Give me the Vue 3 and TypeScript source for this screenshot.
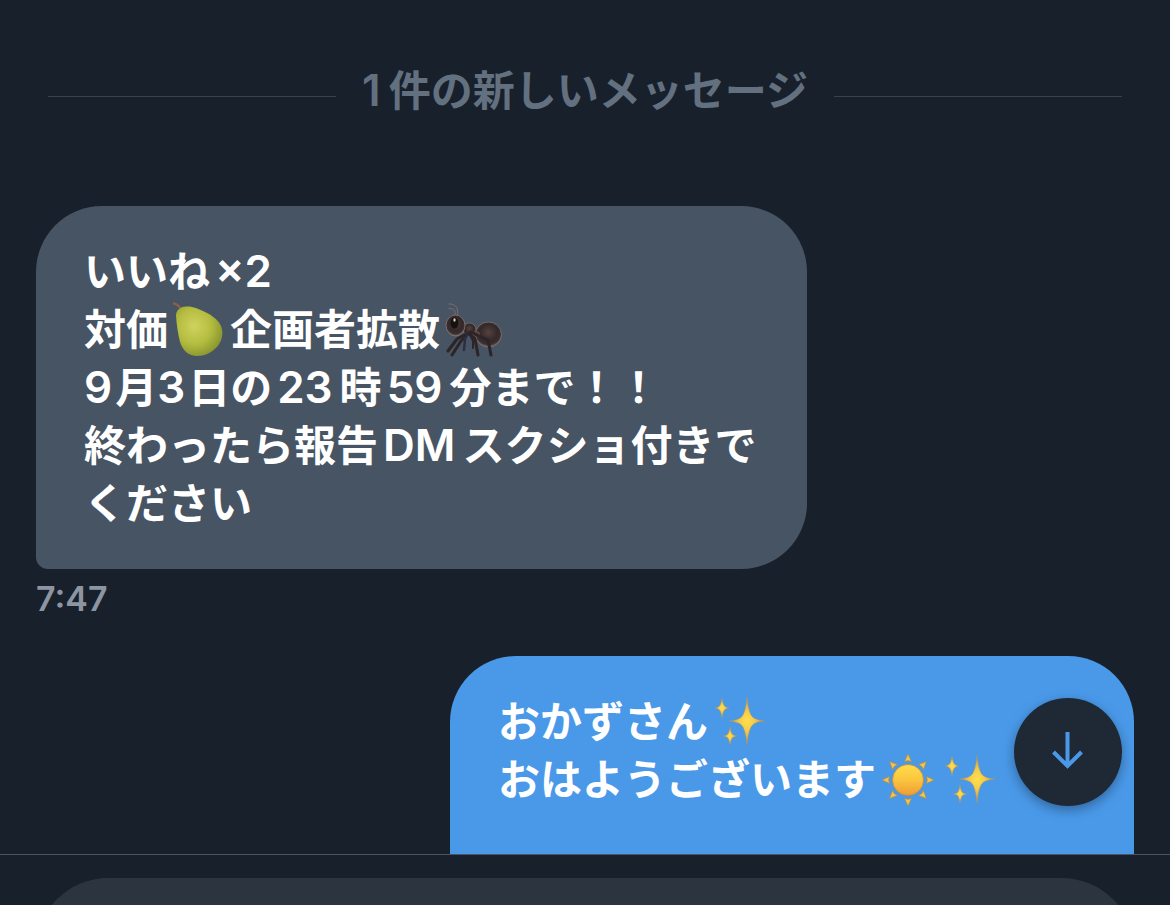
<script setup lang="ts">
import { ref } from 'vue'

type Part = { kind: 'text' | 'digit' | 'latin' | 'emoji'; value: string }
type Message = { id: number; side: 'incoming' | 'outgoing'; lines: Part[][]; time?: string }

const t = (value: string): Part => ({ kind: 'text', value })
const d = (value: string): Part => ({ kind: 'digit', value })
const l = (value: string): Part => ({ kind: 'latin', value })
const e = (value: string): Part => ({ kind: 'emoji', value })

const messages: Message[] = [
  {
    id: 1,
    side: 'incoming',
    time: '7:47',
    lines: [
      [t('いいね'), l('×2')],
      [t('対価'), e('pear'), t('企画者拡散'), e('ant')],
      [d('9'), t('月'), d('3'), t('日の'), l('23'), t('時'), l('59'), t('分まで！！')],
      [t('終わったら報告'), l('DM'), t('スクショ付きで'), t('ください')],
    ],
  },
  {
    id: 2,
    side: 'outgoing',
    lines: [
      [t('おかずさん'), e('sparkles')],
      [t('おはようございます'), e('sun'), e('sparkles')],
    ],
  },
]

const rays = [0, 45, 90, 135, 180, 225, 270, 315]
const draft = ref('')
const thread = ref<HTMLElement | null>(null)

function scrollToLatest(): void {
  thread.value?.scrollTo({ top: thread.value.scrollHeight })
}
</script>

<template>
  <div class="screen">
    <svg class="defs" width="0" height="0" aria-hidden="true">
      <defs>
        <radialGradient id="pearFill" cx="0.4" cy="0.4" r="0.65">
          <stop offset="0" stop-color="#cfd35e" />
          <stop offset="0.55" stop-color="#b5bd40" />
          <stop offset="1" stop-color="#87932f" />
        </radialGradient>
        <radialGradient id="antFill" cx="0.5" cy="0.42" r="0.56">
          <stop offset="0" stop-color="#54433f" />
          <stop offset="0.6" stop-color="#33282a" />
          <stop offset="0.85" stop-color="#3a2f30" />
          <stop offset="1" stop-color="#6f5d5a" />
        </radialGradient>
        <radialGradient id="sparkFill" cx="0.5" cy="0.5" r="0.5">
          <stop offset="0" stop-color="#ffe04d" />
          <stop offset="0.4" stop-color="#f5cc4a" />
          <stop offset="1" stop-color="#b59a5c" />
        </radialGradient>
        <linearGradient id="sunFill" x1="0" y1="0" x2="0" y2="1">
          <stop offset="0" stop-color="#ffdc4a" />
          <stop offset="0.5" stop-color="#fbc53f" />
          <stop offset="1" stop-color="#ee9c34" />
        </linearGradient>
      </defs>
    </svg>

    <div class="viewport">
      <main ref="thread" class="thread">
        <div class="divider">
          <span class="rule"></span>
          <h2 class="divider-text"><span class="count">1</span>件の新しいメッセージ</h2>
          <span class="rule"></span>
        </div>

        <article v-for="m in messages" :key="m.id" class="message" :class="m.side">
          <div class="bubble">
            <p v-for="(line, i) in m.lines" :key="i" class="line">
              <template v-for="(p, j) in line" :key="j">
                <span v-if="p.kind !== 'emoji'" :class="p.kind">{{ p.value }}</span>
                <svg v-else-if="p.value === 'pear'" class="emoji" viewBox="0 0 56 56" role="img" aria-label="洋梨">
                  <path d="M3 1.5 C6 2 8 4 11 8" fill="none" stroke="#86604a" stroke-width="2.4" stroke-linecap="round" />
                  <path d="M5 14 C5 8 9 5 15 4.500 C22 4 27 7 32 9 C39 12 45 16 49 22 C53 29 52 38 46 45 C40 51 34 54 26 54 C18 54 12 49 9 40 C7 32 5.500 22 5 14 Z" fill="url(#pearFill)" />
                </svg>
                <svg v-else-if="p.value === 'ant'" class="emoji" viewBox="0 -1 56 56" role="img" aria-label="蟻">
                  <g fill="none" stroke="#7c6d6c" stroke-width="1" stroke-linecap="round">
                    <path d="M14 13 C17 6 12 0 6 1" />
                    <path d="M12 12 C13 8 11 5 6 5.500" />
                  </g>
                  <ellipse cx="45.500" cy="31.500" rx="13" ry="12.500" fill="url(#antFill)" stroke="#85746f" stroke-width="0.800" />
                  <ellipse cx="26.500" cy="26.500" rx="6.500" ry="6.500" fill="url(#antFill)" stroke="#85746f" stroke-width="0.700" />
                  <ellipse cx="33" cy="31" rx="4" ry="3" fill="#5a4848" />
                  <g fill="none" stroke="#2c2426" stroke-width="3" stroke-linecap="round" stroke-linejoin="round">
                    <path d="M23 31 L14 36 L5 48" />
                    <path d="M24 32 L18 38 L9 52" />
                    <path d="M24 31 L22 36 L21 47" stroke="#2b2e42" stroke-width="2.400" />
                    <path d="M26 31 L32 36 L35 52" />
                    <path d="M27 31 L30 38 L30 45" stroke-width="2" />
                    <path d="M28 29 L36 33 L45 37 L48 52" />
                  </g>
                  <ellipse cx="12.500" cy="22.500" rx="9.500" ry="10.500" fill="url(#antFill)" stroke="#85746f" stroke-width="0.800" />
                  <ellipse cx="11.500" cy="20" rx="4" ry="5.500" fill="#17110f" />
                  <ellipse cx="11.500" cy="17" rx="1.200" ry="1.800" fill="#d8d3d2" />
                </svg>
                <svg v-else-if="p.value === 'sparkles'" class="emoji" viewBox="0 0 56 56" role="img" aria-label="きらきら">
                  <g fill="url(#sparkFill)" stroke="#a69565" stroke-width="0.500">
                    <path d="M36 3 Q37.500 20 42 23.500 Q45 26 54 27 Q45 28 42 30.500 Q37.500 34 36 51 Q34.500 34 30 30.500 Q27 28 18 27 Q27 26 30 23.500 Q34.500 20 36 3 Z" />
                    <path d="M11 4 Q12 10.500 13.500 12 Q15 13.300 18 14 Q15 14.700 13.500 16 Q12 17.500 11 24 Q10 17.500 8.500 16 Q7 14.700 4 14 Q7 13.300 8.500 12 Q10 10.500 11 4 Z" />
                    <path d="M19 33 Q20 39 21.500 40.500 Q23 41.500 26 42 Q23 42.500 21.500 43.500 Q20 45 19 51 Q18 45 16.500 43.500 Q15 42.500 12 42 Q15 41.500 16.500 40.500 Q18 39 19 33 Z" />
                  </g>
                </svg>
                <svg v-else class="emoji" viewBox="0 0 56 56" role="img" aria-label="太陽">
                  <path
                    v-for="a in rays"
                    :key="a"
                    d="M29 2 L32.500 9.500 Q29 8 25.500 9.500 Z"
                    :transform="`rotate(${a} 29 28)`"
                    fill="#f2c54d"
                    stroke="#b08e4c"
                    stroke-width="0.800"
                    stroke-linejoin="round"
                  />
                  <circle cx="29" cy="28" r="15.500" fill="url(#sunFill)" stroke="#c08c3c" stroke-width="0.800" />
                </svg>
              </template>
            </p>
          </div>
          <time v-if="m.time" class="time">{{ m.time }}</time>
        </article>
      </main>

      <button class="jump" type="button" aria-label="最新のメッセージへ" @click="scrollToLatest">
        <svg viewBox="0 0 36 40" width="36" height="40" aria-hidden="true">
          <path d="M17.500 0 V34 M3.500 20 L17.500 34 L31.500 20" fill="none" stroke="#4a99e9" stroke-width="4" />
        </svg>
      </button>
    </div>

    <footer class="composer">
      <input v-model="draft" class="field" type="text" aria-label="メッセージを作成" />
    </footer>
  </div>
</template>

<style>
body {
  margin: 0;
  background: #18202b;
}
</style>

<style scoped>
.screen {
  display: flex;
  flex-direction: column;
  height: 100vh;
  overflow: hidden;
  background: #18202b;
  color: #fff;
  font-family: Inter, "Noto Sans CJK JP", sans-serif;
  font-size: 42px;
  font-weight: 600;
  line-height: 58px;
  text-autospace: no-autospace;
}

.defs {
  position: absolute;
}

.viewport {
  position: relative;
  flex: 1;
  min-height: 0;
}

.thread {
  box-sizing: border-box;
  height: 100%;
  overflow: hidden;
  padding: 62px 36px 0;
}

.divider {
  display: flex;
  align-items: center;
  gap: 26px;
  margin: 0 12px 86px;
}

.rule {
  flex: 1;
  height: 1px;
  margin-top: 11px;
  background: #38424e;
}

.divider-text {
  margin: 0;
  color: #637080;
  font-size: 42px;
  font-weight: 600;
}

.message {
  display: flex;
  flex-direction: column;
  align-items: flex-start;
  margin-bottom: 36px;
}

.outgoing {
  align-items: flex-end;
}

.bubble {
  box-sizing: border-box;
  max-width: 771px;
  padding: 37px 48px 36px;
  border-radius: 66px 66px 66px 12px;
  background: #475463;
}

.outgoing .bubble {
  min-width: 684px;
  padding-bottom: 144px;
  border-radius: 66px 66px 12px 66px;
  background: #4a99e9;
}

.line {
  margin: 0;
  word-break: break-all;
}

.count,
.digit,
.latin {
  font-size: 44px;
  line-height: 44px;
}

.count {
  margin-right: 8px;
}

.digit {
  margin-right: 3px;
}

.latin {
  margin: 0 7px 0 5px;
}

.emoji {
  width: 56px;
  height: 56px;
  margin: 0 3px;
  overflow: visible;
  vertical-align: -13px;
}

.time {
  margin-top: 8px;
  color: #8d95a2;
  font-size: 34px;
  line-height: 43px;
}

.jump {
  position: absolute;
  right: 48px;
  bottom: 48px;
  display: grid;
  place-items: center;
  width: 108px;
  height: 108px;
  padding: 0;
  border: 0;
  border-radius: 50%;
  background: #1f2936;
  box-shadow: 0 4px 12px rgba(15, 25, 40, 0.4);
}

.composer {
  flex: 0 0 50px;
  overflow: hidden;
  padding: 0 36px;
  border-top: 1px solid #4b5561;
}

.field {
  box-sizing: border-box;
  display: block;
  width: 100%;
  height: 144px;
  margin-top: 23px;
  padding: 0 60px;
  border: 0;
  border-radius: 72px;
  background: #2b343f;
  color: #fff;
  font: inherit;
}
</style>
